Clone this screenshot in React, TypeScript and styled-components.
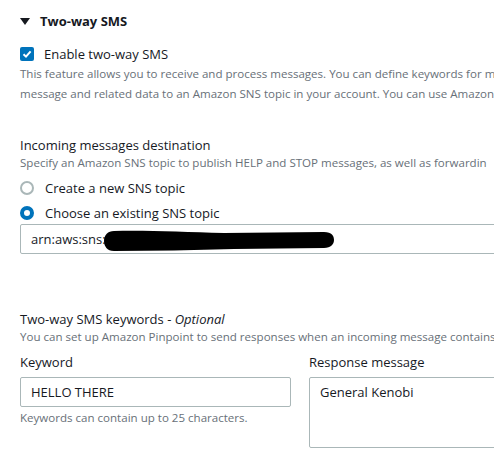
import styled, { createGlobalStyle } from "styled-components";

const GlobalStyle = createGlobalStyle`
  html, body {
    margin: 0;
    padding: 0;
    background: #ffffff;
    overflow: hidden;
  }
  body {
    font-family: "Open Sans", "Noto Sans", "Liberation Sans", sans-serif;
    color: #16191f;
  }
`;

const Page = styled.div`
  width: 900px;
  padding: 11px 0 0 20px;
  box-sizing: border-box;
`;

const SectionHeader = styled.div`
  display: flex;
  align-items: center;
  gap: 10px;
  height: 20px;
  font-size: 13px;
  font-weight: 700;
  color: #16191f;
`;

const Caret = styled.span`
  width: 0;
  height: 0;
  border-left: 5px solid transparent;
  border-right: 5px solid transparent;
  border-top: 7px solid #16191f;
`;

const CheckRow = styled.label`
  display: flex;
  align-items: center;
  gap: 10px;
  height: 20px;
  margin-top: 13px;
  font-size: 13px;
`;

const CheckBox = styled.span`
  width: 14px;
  height: 14px;
  border-radius: 2px;
  background: #0073bb;
  display: flex;
  align-items: center;
  justify-content: center;
`;

const Description = styled.div<{ $lineHeight?: number }>`
  font-size: 11.55px;
  line-height: ${(p) => p.$lineHeight ?? 16}px;
  color: #687078;
  white-space: nowrap;
`;

const Block = styled.div<{ $top: number }>`
  margin-top: ${(p) => p.$top}px;
`;

const Label = styled.div`
  font-size: 13px;
  line-height: 20px;
  white-space: nowrap;
`;

const RadioGroup = styled.div`
  display: flex;
  flex-direction: column;
  margin-top: 4px;
`;

const RadioRow = styled.label`
  display: flex;
  align-items: center;
  gap: 11px;
  height: 25px;
  font-size: 13px;
`;

const Radio = styled.span<{ $checked?: boolean }>`
  width: 14px;
  height: 14px;
  box-sizing: border-box;
  border-radius: 50%;
  background: #ffffff;
  border: ${(p) => (p.$checked ? "4px solid #0073bb" : "2px solid #aab7b8")};
`;

const InputWrap = styled.div`
  position: relative;
  margin-top: -1px;
`;

const TextInput = styled.div<{ $width?: string; $height?: number }>`
  width: ${(p) => p.$width ?? "100%"};
  height: ${(p) => p.$height ?? 30}px;
  box-sizing: border-box;
  border: 1px solid #aab7b8;
  border-radius: 2px;
  padding: 5px 10px;
  font-size: 13px;
  line-height: 18px;
  color: #16191f;
  white-space: nowrap;
`;

const Redaction = styled.svg`
  position: absolute;
  left: 84px;
  top: 6px;
`;

const Fields = styled.div`
  display: grid;
  grid-template-columns: 271px 1fr;
  column-gap: 18px;
  margin-top: 7px;
`;

const Field = styled.div`
  display: flex;
  flex-direction: column;
  gap: 5px;
`;

const Hint = styled.div`
  font-size: 11.55px;
  line-height: 16px;
  color: #687078;
  margin-top: -2px;
  white-space: nowrap;
`;

export default function App() {
  return (
    <>
      <GlobalStyle />
      <Page>
        <SectionHeader>
          <Caret />
          Two-way SMS
        </SectionHeader>

        <CheckRow>
          <CheckBox>
            <svg width="10" height="10" viewBox="0 0 10 10">
              <path d="M1.5 5.2 L4 7.6 L8.6 2.4" fill="none" stroke="#fff" strokeWidth="2" />
            </svg>
          </CheckBox>
          Enable two-way SMS
        </CheckRow>
        <Description $lineHeight={20}>
          <div>This feature allows you to receive and process messages. You can define keywords for m</div>
          <div>message and related data to an Amazon SNS topic in your account. You can use Amazon</div>
        </Description>

        <Block $top={31}>
          <Label>Incoming messages destination</Label>
          <Description>
            Specify an Amazon SNS topic to publish HELP and STOP messages, as well as forwardin
          </Description>
          <RadioGroup>
            <RadioRow>
              <Radio />
              Create a new SNS topic
            </RadioRow>
            <RadioRow>
              <Radio $checked />
              Choose an existing SNS topic
            </RadioRow>
          </RadioGroup>
          <InputWrap>
            <TextInput>arn:aws:sns:</TextInput>
            <Redaction width="232" height="22" viewBox="0 0 232 22">
              <path
                d="M10 1 C40 0 80 2 120 3 L220 2 C228 2 230 6 230 10 C230 14 227 18 220 18 L130 19 C90 20 50 21 10 21 C3 21 0 16 0 11 C0 5 4 1 10 1 Z"
                fill="#000"
              />
            </Redaction>
          </InputWrap>
        </Block>

        <Block $top={55}>
          <Label>
            Two-way SMS keywords - <i>Optional</i>
          </Label>
          <Description>
            You can set up Amazon Pinpoint to send responses when an incoming message contains
          </Description>
          <Fields>
            <Field>
              <Label>Keyword</Label>
              <TextInput>HELLO THERE</TextInput>
              <Hint>Keywords can contain up to 25 characters.</Hint>
            </Field>
            <Field>
              <Label>Response message</Label>
              <TextInput $height={71}>General Kenobi</TextInput>
            </Field>
          </Fields>
        </Block>
      </Page>
    </>
  );
}
